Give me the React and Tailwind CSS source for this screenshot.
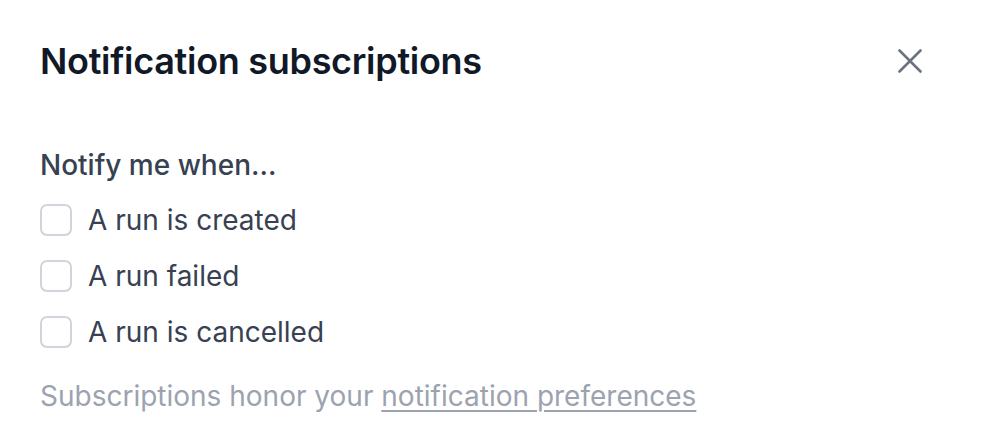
import React, { useState } from "react";

const options = [
  { id: "created", label: "A run is created" },
  { id: "failed", label: "A run failed" },
  { id: "cancelled", label: "A run is cancelled" },
];

const App = () => {
  const [checked, setChecked] = useState({});

  return (
    <div
      className="w-[986px] h-[440px] bg-white px-10 pt-[41px]"
      style={{ fontFamily: "Inter, 'Noto Sans', sans-serif" }}
    >
      {/* Header */}
      <div className="flex items-center justify-between">
        <h1 className="text-[36px] leading-[40px] font-semibold text-[#111827] tracking-[-0.3px]">
          Notification subscriptions
        </h1>
        <button className="mr-[24px] text-[#6b7280]">
          <svg width="24" height="24" viewBox="0 0 24 24" fill="none" stroke="currentColor" strokeWidth="2.6" strokeLinecap="round">
            <path d="M1.5 1.5l21 21M22.5 1.5l-21 21" />
          </svg>
        </button>
      </div>

      {/* Options */}
      <div className="mt-[66px]">
        <p className="text-[28px] leading-[36px] font-medium text-[#374151]">Notify me when...</p>
        <div className="mt-[21px] flex flex-col gap-[24px]">
          {options.map((opt) => (
            <label key={opt.id} className="flex items-center gap-4 cursor-pointer">
              <input
                type="checkbox"
                checked={!!checked[opt.id]}
                onChange={() => setChecked({ ...checked, [opt.id]: !checked[opt.id] })}
                className="appearance-none w-8 h-8 rounded-[7px] border-2 border-[#d1d5db] bg-white"
              />
              <span className="text-[28px] leading-[32px] text-[#374151]">{opt.label}</span>
            </label>
          ))}
        </div>
        <p className="mt-[30px] text-[28px] leading-[36px] text-[#9ca3af]">
          Subscriptions honor your{" "}
          <a href="#" className="underline underline-offset-4 decoration-2">notification preferences</a>
        </p>
      </div>
    </div>
  );
};

export default App;
